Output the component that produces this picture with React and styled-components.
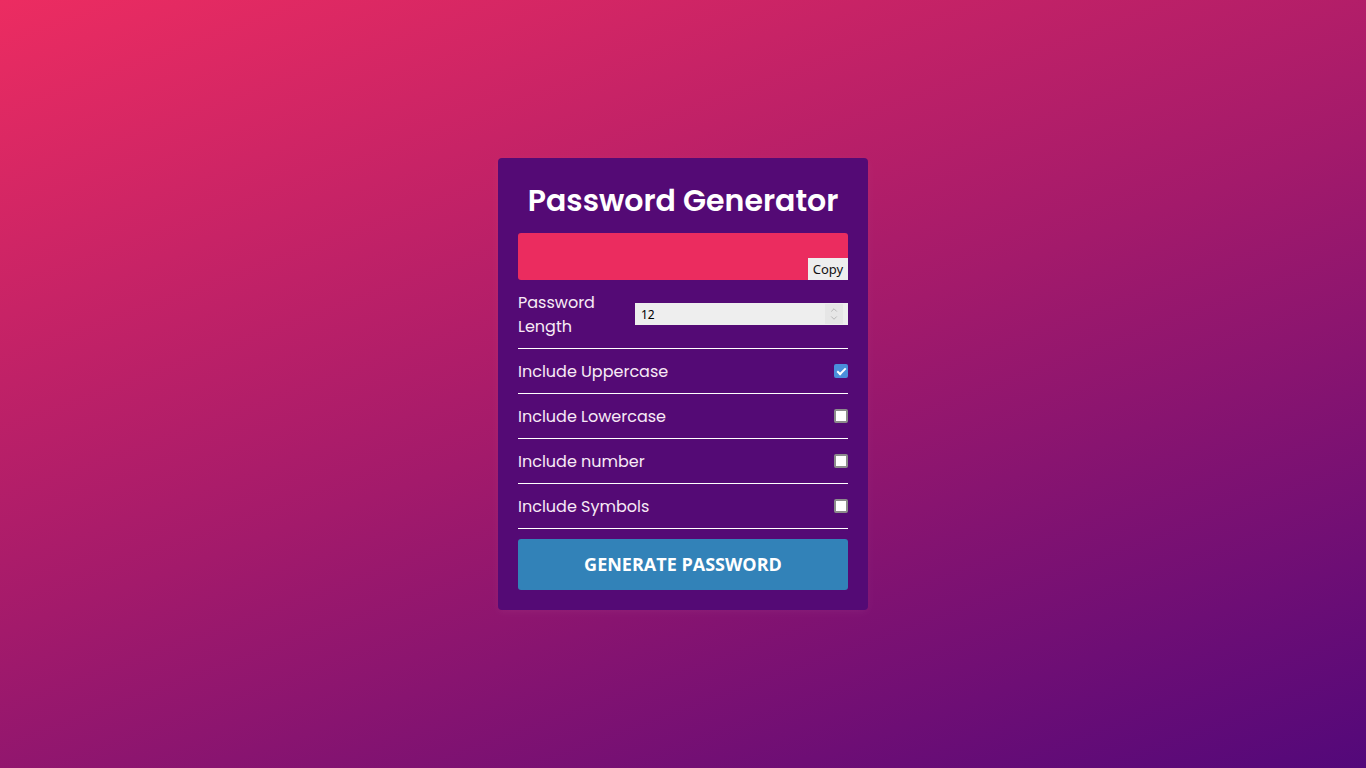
import React, { useState } from "react";
import styled, { createGlobalStyle } from "styled-components";
import { ChevronUp, ChevronDown } from "lucide-react";

const GlobalStyle = createGlobalStyle`
  * { box-sizing: border-box; }
  html, body { margin: 0; padding: 0; height: 100%; }
  body {
    font-family: "Poppins", "Open Sans", sans-serif;
    background: linear-gradient(160deg, #ec2c61 0%, #a31a6b 50%, #53087a 100%);
    background-attachment: fixed;
  }
  #root { height: 100%; }
`;

const Page = styled.div`
  height: 100vh;
  display: flex;
  align-items: center;
  justify-content: center;
  color: #fff;
`;

const Card = styled.div`
  width: 370px;
  padding: 20px;
  background: #540a75;
  border-radius: 4px;
  box-shadow: 0 2px 10px rgba(255, 255, 255, 0.05);
`;

const Title = styled.h2`
  margin: 1px 0 10px;
  height: 44px;
  line-height: 44px;
  text-align: center;
  font-size: 30px;
  font-weight: 600;
`;

const Result = styled.div`
  position: relative;
  height: 47px;
  background: #eb2c5f;
  border-radius: 3px;
  font-size: 18px;
  line-height: 47px;
  padding: 0 10px;
  letter-spacing: 1px;
`;

const CopyButton = styled.button`
  position: absolute;
  right: 0;
  bottom: 0;
  width: 40px;
  height: 22px;
  padding: 0;
  border: none;
  background: #eeeeee;
  color: #111;
  font-family: "Noto Sans", sans-serif;
  font-size: 13px;
  line-height: 22px;
  cursor: pointer;
`;

const Row = styled.div`
  display: flex;
  align-items: center;
  justify-content: space-between;
  padding: 10px 0;
  border-bottom: 1px solid #fff;
`;

const Label = styled.label`
  font-size: 16px;
  line-height: 24px;
  color: #f8eaf6;
  transform: translateY(1px);
  max-width: ${(p) => p.$max || "none"};
`;

const InputWrap = styled.div`
  position: relative;
  width: 213px;
  height: 22px;
`;

const NumberInput = styled.input`
  display: block;
  width: 100%;
  height: 100%;
  margin: 0;
  border: none;
  outline: none;
  background: #eeeeee;
  padding: 0 30px 0 6px;
  font-family: "Noto Sans", sans-serif;
  font-size: 12px;
  color: #000;
  -moz-appearance: textfield;

  &::-webkit-inner-spin-button,
  &::-webkit-outer-spin-button {
    -webkit-appearance: none;
    margin: 0;
  }
`;

const Spinner = styled.div`
  position: absolute;
  right: 5px;
  top: 1px;
  width: 18px;
  height: 20px;
  background: #e6e6e6;
  display: flex;
  flex-direction: column;
  align-items: center;
  justify-content: center;
  color: #9a9a9a;
  pointer-events: none;

  svg { display: block; margin: -1px 0; }
`;

const Check = styled.input`
  appearance: none;
  -webkit-appearance: none;
  position: relative;
  width: 14px;
  height: 14px;
  margin: 0;
  border: 2px solid #8c8c8c;
  border-radius: 2px;
  background: #fff;
  cursor: pointer;

  &:checked {
    border-color: #4a8fdb;
    background: #4a8fdb;
  }

  &:checked::after {
    content: "";
    position: absolute;
    left: 3px;
    top: 0px;
    width: 3px;
    height: 7px;
    border: solid #fff;
    border-width: 0 2px 2px 0;
    transform: rotate(45deg);
  }
`;

const GenerateButton = styled.button`
  display: block;
  width: 100%;
  height: 51px;
  margin-top: 10px;
  padding: 0 0 2px;
  border: none;
  border-radius: 3px;
  background: #3282b8;
  color: #fff;
  font-family: "Open Sans", sans-serif;
  font-weight: 700;
  font-size: 18px;
  text-transform: uppercase;
  cursor: pointer;
`;

const options = [
  { key: "upper", label: "Include Uppercase", on: true },
  { key: "lower", label: "Include Lowercase", on: false },
  { key: "number", label: "Include number", on: false },
  { key: "symbol", label: "Include Symbols", on: false },
];

export default function App() {
  const [length, setLength] = useState(12);
  const [checks, setChecks] = useState(
    Object.fromEntries(options.map((o) => [o.key, o.on]))
  );

  return (
    <Page>
      <GlobalStyle />
      <Card>
        <Title>Password Generator</Title>
        <Result>
          <CopyButton>Copy</CopyButton>
        </Result>
        <Row>
          <Label $max="90px" htmlFor="length">Password Length</Label>
          <InputWrap>
            <NumberInput
              id="length"
              type="number"
              min="4"
              max="20"
              value={length}
              onChange={(e) => setLength(e.target.value)}
            />
            <Spinner>
              <ChevronUp size={10} strokeWidth={1.5} />
              <ChevronDown size={10} strokeWidth={1.5} />
            </Spinner>
          </InputWrap>
        </Row>
        {options.map((o) => (
          <Row key={o.key}>
            <Label htmlFor={o.key}>{o.label}</Label>
            <Check
              id={o.key}
              type="checkbox"
              checked={checks[o.key]}
              onChange={() => setChecks({ ...checks, [o.key]: !checks[o.key] })}
            />
          </Row>
        ))}
        <GenerateButton>Generate Password</GenerateButton>
      </Card>
    </Page>
  );
}
